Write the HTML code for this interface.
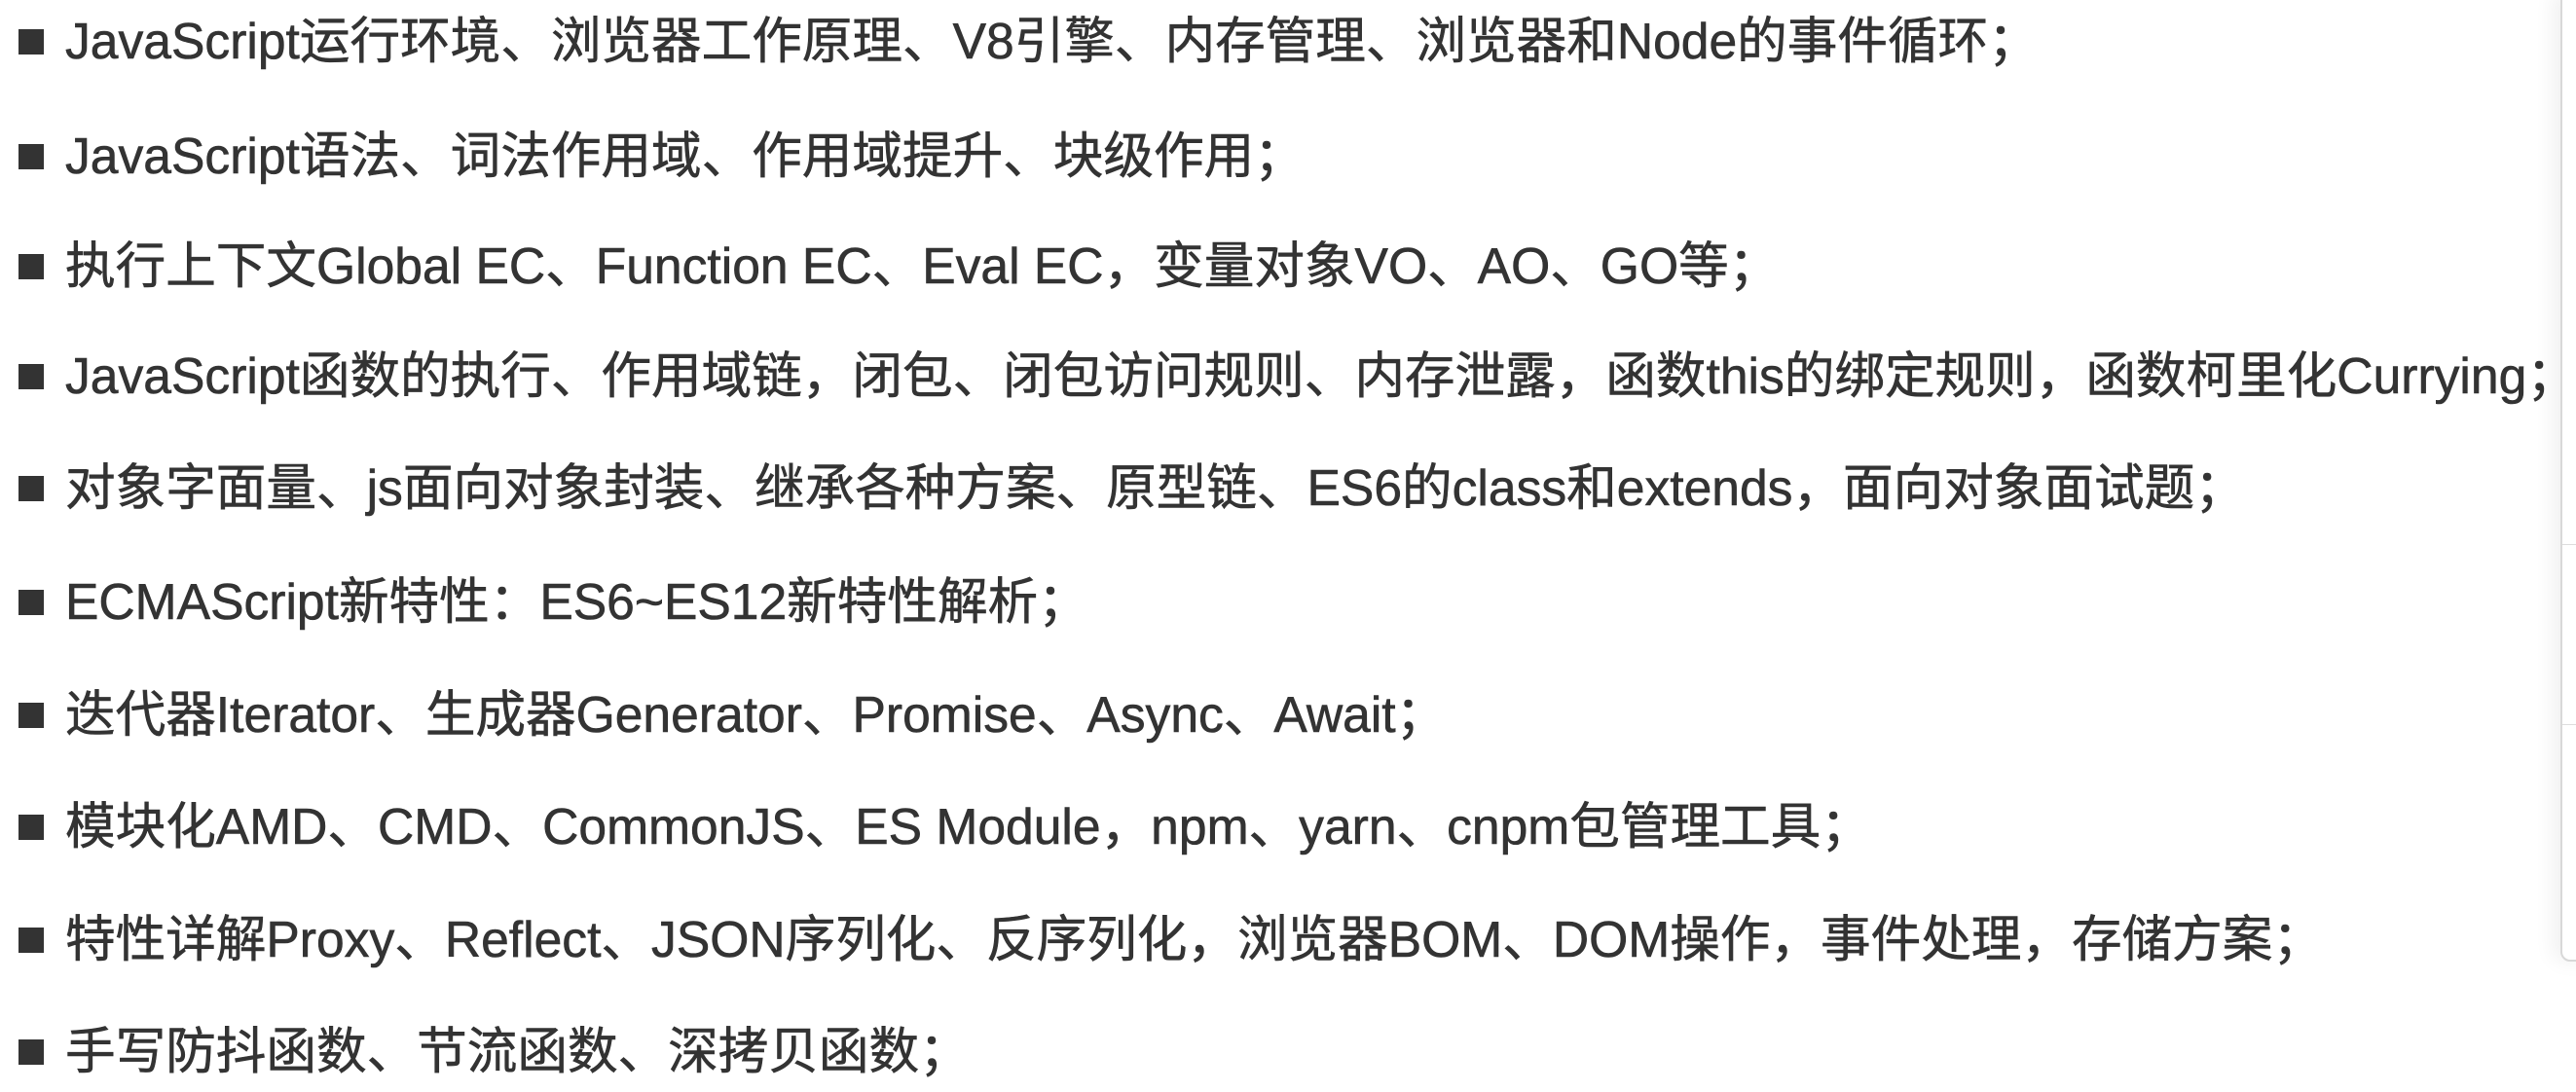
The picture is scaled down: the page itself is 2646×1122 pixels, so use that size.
<!DOCTYPE html>
<html><head><meta charset="utf-8"><style>
html,body{margin:0;padding:0;background:#fff;}
body{width:2646px;height:1122px;position:relative;overflow:hidden;font-family:"Liberation Sans","Noto Sans CJK SC",sans-serif;color:#333;}
.l{position:absolute;left:67px;font-size:51.6px;line-height:60px;white-space:nowrap;-webkit-text-stroke:0.6px #333;}
.l:before{content:"";position:absolute;left:-48px;top:18px;width:26px;height:26px;background:#333;}
.panel{position:absolute;left:2630px;top:-10px;width:40px;height:994px;border:2px solid #d8d8d8;border-radius:10px;background:#fff;box-shadow:-8px 0 20px rgba(0,0,0,0.06);}
.d{position:absolute;left:0;right:0;height:1px;background:#ddd;}
</style></head><body>
<div class="l" style="top:12px">JavaScript运行环境、浏览器工作原理、V8引擎、内存管理、浏览器和Node的事件循环；</div>
<div class="l" style="top:130px">JavaScript语法、词法作用域、作用域提升、块级作用；</div>
<div class="l" style="top:243px">执行上下文Global EC、Function EC、Eval EC，变量对象VO、AO、GO等；</div>
<div class="l" style="top:356px">JavaScript函数的执行、作用域链，闭包、闭包访问规则、内存泄露，函数this的绑定规则，函数柯里化Currying；</div>
<div class="l" style="top:471px">对象字面量、js面向对象封装、继承各种方案、原型链、ES6的class和extends，面向对象面试题；</div>
<div class="l" style="top:588px">ECMAScript新特性：ES6~ES12新特性解析；</div>
<div class="l" style="top:704px">迭代器Iterator、生成器Generator、Promise、Async、Await；</div>
<div class="l" style="top:819px">模块化AMD、CMD、CommonJS、ES Module，npm、yarn、cnpm包管理工具；</div>
<div class="l" style="top:935px">特性详解Proxy、Reflect、JSON序列化、反序列化，浏览器BOM、DOM操作，事件处理，存储方案；</div>
<div class="l" style="top:1050px">手写防抖函数、节流函数、深拷贝函数；</div>
<div class="panel"><div class="d" style="top:567px"></div><div class="d" style="top:752px"></div></div>
</body></html>
